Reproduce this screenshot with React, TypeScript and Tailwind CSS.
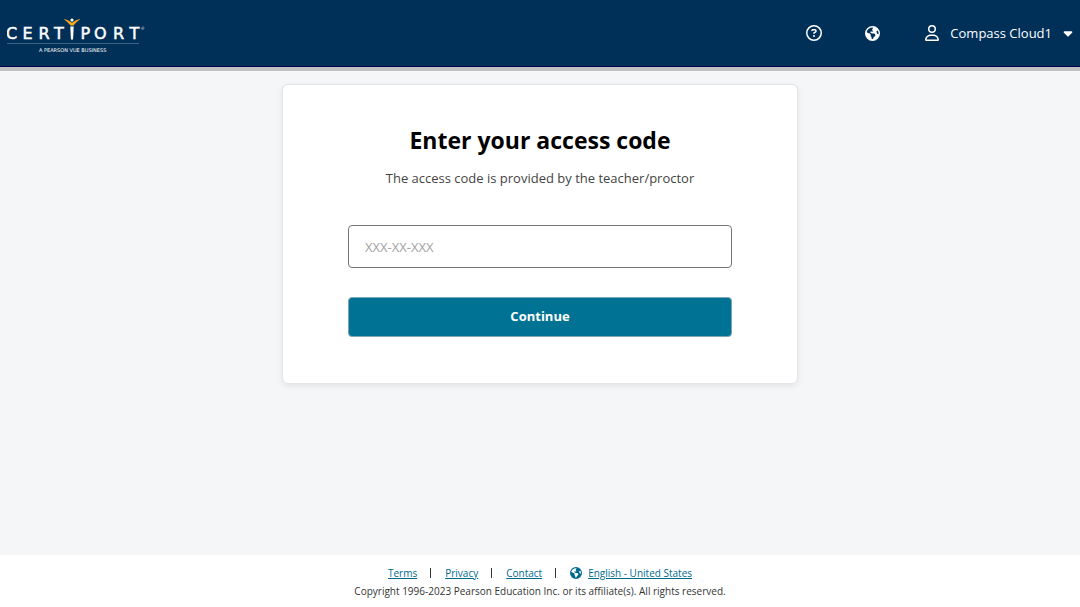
import { useState } from 'react'
import { FaCaretDown, FaEarthAmericas, FaRegCircleQuestion, FaRegUser } from 'react-icons/fa6'

const footerLinks = ['Terms', 'Privacy', 'Contact']

function Logo() {
  return (
    <svg width="140" height="40" viewBox="0 0 140 40" role="img" aria-label="Certiport">
      <g fill="#ffffff" stroke="#ffffff" strokeWidth="0.5" fontFamily="'DejaVu Sans', sans-serif" fontSize="16">
        <text x="-1 15.500 31.500 47" y="26">CERT</text>
        <text x="73.500 87 106 122.500" y="26">PORT</text>
      </g>
      <text x="134" y="17" fill="#ffffff" fontFamily="Lato, sans-serif" fontSize="4">®</text>
      {/* Figure that stands in for the I */}
      <path d="M56.500 6c3 .5 6 1.800 8.500 3.800 2.500-2 5.500-3.300 8.500-3.800-2.800 2-5 4-7 6.500h-3c-2-2.500-4.200-4.500-7-6.500Z" fill="#f9a71b" />
      <circle cx="65" cy="7" r="1.600" fill="#ffffff" />
      <path d="M63.300 13.500h3.400l-.6 12.500-1.100 1-1.100-1Z" fill="#ffffff" />
      <path d="M0 30.500h132" stroke="#3f6384" strokeWidth="1" />
      <text x="32" y="39" fill="#ffffff" fontFamily="'DejaVu Sans', sans-serif" fontSize="5">
        A PEARSON VUE BUSINESS
      </text>
    </svg>
  )
}

function Header() {
  return (
    <header className="border-b-4 border-[#c0c0c0] bg-[#003058] text-white">
      <div className="flex h-[67px] items-center justify-between border-b border-[#00004d] pl-[7px] pr-1">
        <a href="#home">
          <Logo />
        </a>
        <nav className="flex items-center">
          <button type="button" aria-label="Help" className="mr-[43px]">
            <FaRegCircleQuestion size={16} />
          </button>
          <button type="button" aria-label="Language" className="mr-11">
            <FaEarthAmericas size={15} />
          </button>
          <button type="button" className="flex items-center text-[13px] font-medium">
            <FaRegUser size={16} className="mr-2.5" />
            <span className="pt-0.5">Compass Cloud1</span>
            <FaCaretDown size={14} className="mr-px ml-[9px]" />
          </button>
        </nav>
      </div>
    </header>
  )
}

function AccessCodeCard() {
  const [code, setCode] = useState('')

  return (
    <form
      onSubmit={(e) => e.preventDefault()}
      className="mx-auto w-full max-w-[516px] rounded-md border border-[#e3e5e8] bg-white px-[65px] pt-[39px] pb-[46px] text-center shadow-[0_2px_6px_rgba(0,0,0,0.08)]"
    >
      <h1 className="text-[23px] leading-8 font-bold text-black">Enter your access code</h1>
      <p className="mt-3 text-[13px] leading-5 text-[#444444]">
        <label htmlFor="access-code">The access code is provided by the teacher/proctor</label>
      </p>
      <input
        id="access-code"
        type="text"
        value={code}
        onChange={(e) => setCode(e.target.value)}
        placeholder="XXX-XX-XXX"
        className="mt-[37px] block h-[43px] w-full rounded border border-[#767676] px-4 text-[13px] text-[#444444] placeholder:text-[#a3a3a3]"
      />
      <button type="submit" className="mt-[29px] h-10 w-full rounded border border-[#7fa5bb] bg-[#007394] text-[13px] font-bold text-white">
        Continue
      </button>
    </form>
  )
}

function Footer() {
  return (
    <footer className="flex h-[52px] flex-col items-center bg-white pt-2.5 text-[10px] leading-4 text-[#333333]">
      <div className="flex items-center">
        {footerLinks.map((label) => (
          <div key={label} className="flex items-center">
            <a href={`#${label.toLowerCase()}`} className="text-[#006a8e] underline">
              {label}
            </a>
            <span className="mr-3.5 ml-[13px] h-2.5 w-px bg-[#333333]" />
          </div>
        ))}
        <FaEarthAmericas size={12} className="mr-1.5 text-[#006a8e]" />
        <a href="#language" className="text-[#006a8e] underline">
          English - United States
        </a>
      </div>
      <p className="mt-0.5">Copyright 1996-2023 Pearson Education Inc. or its affiliate(s). All rights reserved.</p>
    </footer>
  )
}

export default function App() {
  return (
    <div className="flex min-h-screen flex-col bg-[#f4f6f8] font-['Open_Sans',sans-serif]">
      <Header />
      <main className="flex-1 pt-[13px]">
        <AccessCodeCard />
      </main>
      <Footer />
    </div>
  )
}
